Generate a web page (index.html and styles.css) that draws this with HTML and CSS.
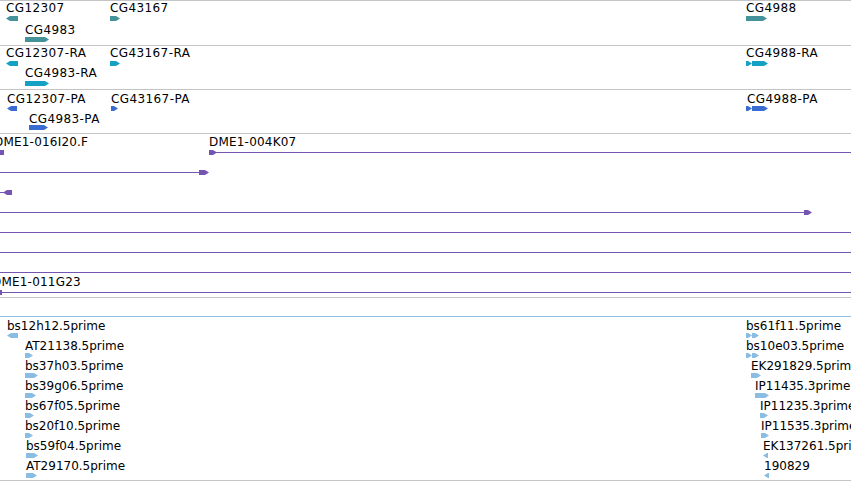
FILE: index.html
```html
<!DOCTYPE html>
<html lang="en">
<head>
  <meta charset="UTF-8">
  <title>Track View</title>
  <link rel="stylesheet" href="styles.css">
</head>
<body>
  <div class="browser">
    <div class="track genes" id="genes"></div>
    <div class="track mrna" id="mrna"></div>
    <div class="track cds" id="cds"></div>
    <div class="track ests" id="ests"></div>
    <div class="track spacer"></div>
    <div class="track reads" id="reads"></div>
  </div>

  <script>
    // feature rows: label x/top, glyph top, glyph parts [x, width, strand], optional line [x1, x2]
    const data = {
      genes: [
        { label: 'CG12307', x: 6, ly: 0, gy: 15, parts: [[6, 12, '-']] },
        { label: 'CG4983', x: 25, ly: 22, gy: 36, parts: [[25, 24, '+']] },
        { label: 'CG43167', x: 110, ly: 0, gy: 15, parts: [[110, 10, '+']] },
        { label: 'CG4988', x: 746, ly: 0, gy: 15, parts: [[746, 21, '+']] }
      ],
      mrna: [
        { label: 'CG12307-RA', x: 6, ly: 0, gy: 15, parts: [[6, 12, '-']] },
        { label: 'CG4983-RA', x: 25, ly: 20, gy: 35, parts: [[25, 24, '+']] },
        { label: 'CG43167-RA', x: 110, ly: 0, gy: 15, parts: [[110, 10, '+']] },
        { label: 'CG4988-RA', x: 746, ly: 0, gy: 15, parts: [[746, 6, '+'], [752, 16, '+']] }
      ],
      cds: [
        { label: 'CG12307-PA', x: 7, ly: 2, gy: 16, parts: [[7, 10, '-']] },
        { label: 'CG4983-PA', x: 29, ly: 22, gy: 35, parts: [[29, 19, '+']] },
        { label: 'CG43167-PA', x: 111, ly: 2, gy: 16, parts: [[111, 7, '+']] },
        { label: 'CG4988-PA', x: 747, ly: 2, gy: 16, parts: [[746, 6, '+'], [752, 16, '+']] }
      ],
      ests: [
        { row: 0, label: 'DME1-016I20.F', x: -6, parts: [[-10, 14, 'box']] },
        { row: 0, label: 'DME1-004K07', x: 209, line: [216, 860], parts: [[209, 8, '+']] },
        { row: 1, line: [0, 200], parts: [[199, 10, '+']] },
        { row: 2, line: [0, 4], parts: [[3, 9, '-']] },
        { row: 3, line: [0, 805], parts: [[804, 8, '+']] },
        { row: 4, line: [0, 860], parts: [] },
        { row: 5, line: [0, 860], parts: [] },
        { row: 6, line: [0, 860], parts: [] },
        { row: 7, label: 'DME1-011G23', x: -8, line: [0, 860], parts: [[-4, 6, 'box']] }
      ],
      reads: [
        { row: 0, label: 'bs12h12.5prime', x: 7, parts: [[7, 11, '-']] },
        { row: 1, label: 'AT21138.5prime', x: 25, parts: [[25, 8, '+']] },
        { row: 2, label: 'bs37h03.5prime', x: 25, parts: [[25, 13, '+']] },
        { row: 3, label: 'bs39g06.5prime', x: 25, parts: [[25, 11, '+']] },
        { row: 4, label: 'bs67f05.5prime', x: 25, parts: [[25, 9, '+']] },
        { row: 5, label: 'bs20f10.5prime', x: 25, parts: [[25, 8, '+']] },
        { row: 6, label: 'bs59f04.5prime', x: 26, parts: [[26, 12, '+']] },
        { row: 7, label: 'AT29170.5prime', x: 26, parts: [[26, 11, '+']] },
        { row: 0, label: 'bs61f11.5prime', x: 746, parts: [[746, 6, '+'], [752, 7, '+']] },
        { row: 1, label: 'bs10e03.5prime', x: 746, parts: [[746, 6, '+'], [752, 7, '+']] },
        { row: 2, label: 'EK291829.5prime', x: 751, parts: [[751, 10, '+']] },
        { row: 3, label: 'IP11435.3prime', x: 755, parts: [[755, 14, '+']] },
        { row: 4, label: 'IP11235.3prime', x: 760, parts: [[760, 8, '+']] },
        { row: 5, label: 'IP11535.3prime', x: 761, parts: [[761, 8, '+']] },
        { row: 6, label: 'EK137261.5prime', x: 763, parts: [[763, 5, '-']] },
        { row: 7, label: '190829', x: 764, parts: [[764, 5, '-']] }
      ]
    };

    // row offsets for the stacked tracks
    const rows = { ests: { ly: 1, gy: 16 }, reads: { ly: 2, gy: 16 } };

    function el(cls, x, y, w) {
      const d = document.createElement('div');
      d.className = cls;
      d.style.left = x + 'px';
      d.style.top = y + 'px';
      if (w !== undefined) d.style.width = w + 'px';
      return d;
    }

    Object.keys(data).forEach(id => {
      const track = document.getElementById(id);
      data[id].forEach(f => {
        let ly = f.ly, gy = f.gy;
        if (rows[id]) {
          ly = rows[id].ly + f.row * 20;
          gy = rows[id].gy + f.row * 20;
        }
        if (f.line) {
          track.appendChild(el('line', f.line[0], gy + 2, f.line[1] - f.line[0]));
        }
        f.parts.forEach(([x, w, strand]) => {
          const cls = strand === '+' ? 'plus' : strand === '-' ? 'minus' : 'box';
          track.appendChild(el('glyph ' + cls, x, gy, w));
        });
        if (f.label) {
          const lab = el('label', f.x, ly);
          lab.textContent = f.label;
          track.appendChild(lab);
        }
      });
    });
  </script>
</body>
</html>
```

FILE: styles.css
```css
body {
  margin: 0;
  background: #fff;
  font-family: "DejaVu Sans", Verdana, sans-serif;
  font-size: 12px;
  color: #000;
  overflow: hidden;
}

.browser {
  width: 851px;
  height: 481px;
  overflow: hidden;
}

.track {
  position: relative;
  border-top: 1px solid #c4c4c4;
  overflow: hidden;
  letter-spacing: 0.4px;
}

.genes { height: 44px; --c: #44939a; }
.mrna { height: 43px; --c: #14a1c3; }
.cds { height: 43px; --c: #396cd1; }
.ests { height: 163px; --c: #7455b2; letter-spacing: 0.2px; }
.spacer { height: 18px; }

.reads {
  height: 163px;
  --c: #8bbde2;
  letter-spacing: 0;
  border-top: 1px solid #8fc0e3;
  border-bottom: 1px solid #c4c4c4;
}

.label {
  position: absolute;
  line-height: 14px;
  white-space: nowrap;
}

.glyph {
  position: absolute;
  height: 5px;
  background: var(--c);
}

.plus {
  clip-path: polygon(0 0, calc(100% - 4px) 0, 100% 50%, calc(100% - 4px) 100%, 0 100%);
}

.minus {
  clip-path: polygon(4px 0, 100% 0, 100% 100%, 4px 100%, 0 50%);
}

.line {
  position: absolute;
  height: 1px;
  background: var(--c);
}
```
